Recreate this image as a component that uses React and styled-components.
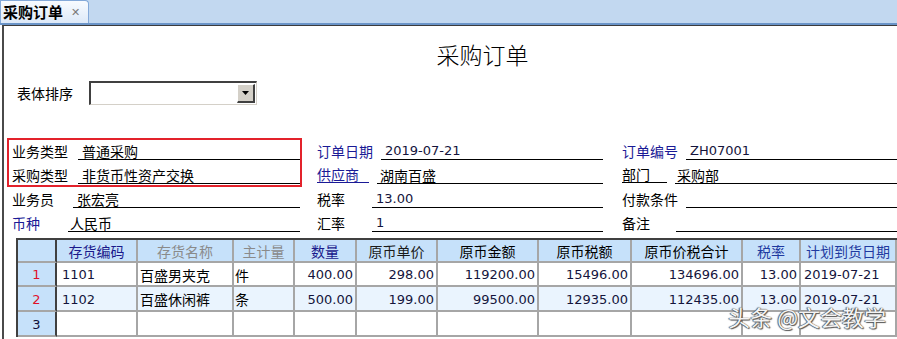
import React from 'react';
import styled, { createGlobalStyle } from 'styled-components';

const GlobalStyle = createGlobalStyle`
  html, body {
    margin: 0;
    padding: 0;
    background: #fff;
  }
  body {
    font-family: "Noto Sans CJK SC", sans-serif;
    color: #000;
  }
`;

const Page = styled.div`
  position: relative;
  width: 897px;
  height: 339px;
  overflow: hidden;
  background: #fff;
`;

const TabBar = styled.div`
  height: 23px;
  background: #c2d8f0;
  border-bottom: 2px solid #6a94c8;
  display: flex;
  align-items: flex-end;
`;

const Tab = styled.div`
  box-sizing: border-box;
  height: 23px;
  width: 89px;
  border: 1px solid #84a9d9;
  border-bottom: none;
  border-radius: 0 4px 0 0;
  background: linear-gradient(#f8fbff, #dde9f8);
  display: flex;
  align-items: center;
  padding-left: 2px;
  gap: 8px;
`;

const TabTitle = styled.span`
  font-size: 15px;
  font-weight: 700;
  line-height: 20px;
`;

const TabClose = styled.span`
  font-family: "DejaVu Sans", sans-serif;
  font-size: 11px;
  font-weight: 700;
  color: #7a7a7a;
`;

const Panel = styled.div`
  margin-left: 2px;
  border-top: 1px solid #3c3c3c;
  border-left: 2px solid #4a4a4a;
  height: 313px;
`;

const Title = styled.h1`
  margin: 13px 0 0;
  height: 30px;
  line-height: 30px;
  padding-left: 64px;
  text-align: center;
  font-size: 23px;
  font-weight: 300;
`;

const SortRow = styled.div`
  margin-top: 12px;
  height: 24px;
  display: flex;
  align-items: center;
  padding-left: 13px;
  gap: 16px;
`;

const SortLabel = styled.span`
  font-size: 14px;
  line-height: 16px;
`;

const Select = styled.div`
  box-sizing: border-box;
  width: 168px;
  height: 24px;
  border-top: 2px solid #404040;
  border-left: 2px solid #404040;
  border-right: 1px solid #d4d0c8;
  border-bottom: 1px solid #d4d0c8;
  background: #fff;
  display: flex;
  justify-content: flex-end;
  align-items: center;
  padding-right: 1px;
`;

const SelectButton = styled.div`
  box-sizing: border-box;
  width: 18px;
  height: 19px;
  background: #d4d0c8;
  border-top: 1px solid #fff;
  border-left: 1px solid #fff;
  border-right: 2px solid #404040;
  border-bottom: 2px solid #404040;
  display: flex;
  align-items: center;
  justify-content: center;
`;

const Form = styled.div`
  position: relative;
  margin-top: 31px;
  padding-left: 8px;
  display: grid;
  grid-template-columns: 305px 305px 275px;
  grid-auto-rows: 24px;
`;

const Highlight = styled.div`
  position: absolute;
  left: 3px;
  top: 2px;
  width: 295px;
  height: 49px;
  box-sizing: border-box;
  border: 2px solid #e3222b;
  pointer-events: none;
`;

const Field = styled.div`
  display: flex;
  align-items: flex-end;
  padding-right: ${(p) => p.$pr}px;
`;

const Label = styled.span`
  flex: 0 0 ${(p) => p.$w}px;
  font-size: 14px;
  line-height: 16px;
  padding-bottom: 1px;
  color: ${(p) => (p.$blue ? '#1a1a96' : '#000')};
`;

const LinkText = styled.span`
  display: inline-block;
  width: calc(100% - 8px);
  border-bottom: 1px solid currentColor;
  line-height: 15px;
`;

const Value = styled.div`
  flex: 1;
  height: 16px;
  border-bottom: 1px solid #000;
  padding-left: ${(p) => p.$pl}px;
  white-space: nowrap;
  font-family: ${(p) =>
    p.$num ? '"DejaVu Sans", sans-serif' : '"Noto Sans CJK SC", sans-serif'};
  font-size: ${(p) => (p.$num ? 13 : 14)}px;
  line-height: 16px;
  color: ${(p) => (p.$num ? '#14143c' : '#000')};
`;

const Grid = styled.div`
  margin: 6px 0 0 12px;
  width: 881px;
  border-top: 2px solid #404040;
  border-left: 2px solid #404040;
  box-sizing: border-box;
`;

const COLS = '39px 81px 96px 61px 62px 81px 101px 93px 111px 58px 96px';

const GridRow = styled.div`
  display: grid;
  grid-template-columns: ${COLS};
  height: ${(p) => p.$h}px;
  background: ${(p) => p.$bg};
`;

const Cell = styled.div`
  box-sizing: border-box;
  border-right: 2px solid ${(p) => (p.$dark ? '#404040' : '#a6a6a6')};
  border-bottom: 2px solid #a6a6a6;
  display: flex;
  align-items: center;
  justify-content: ${(p) => p.$align || 'flex-start'};
  padding: 1px ${(p) => p.$pr ?? 2}px 0 ${(p) => p.$pl ?? 2}px;
  white-space: nowrap;
  overflow: hidden;
  background: ${(p) => p.$bg || 'transparent'};
  font-family: ${(p) =>
    p.$num ? '"DejaVu Sans", sans-serif' : '"Noto Sans CJK SC", sans-serif'};
  font-size: ${(p) => (p.$num ? 13 : 14)}px;
  color: ${(p) => p.$color || '#000'};
`;

const Watermark = styled.div`
  position: absolute;
  right: 11px;
  top: 302px;
  font-size: 22px;
  line-height: 28px;
  color: #f4f4f4;
  text-shadow: 0 0 1px #333, 1px 1px 1px #555, -1px 0 1px #666;
  white-space: nowrap;
  pointer-events: none;
`;

const HEAD_BG = '#c6e1fa';
const NAVY = '#1a1a8c';

const fields = [
  { label: '业务类型', w: 66, value: '普通采购' },
  { label: '订单日期', w: 64, value: '2019-07-21', blue: true, num: true },
  { label: '订单编号', w: 64, value: 'ZH07001', blue: true, num: true },
  { label: '采购类型', w: 66, value: '非货币性资产交换' },
  { label: '供应商', w: 60, value: '湖南百盛', blue: true, link: true, pl: 3 },
  { label: '部门', w: 53, value: '采购部', link: true, pl: 2 },
  { label: '业务员', w: 61, value: '张宏亮' },
  { label: '税率', w: 55, value: '13.00', num: true },
  { label: '付款条件', w: 64, value: '' },
  { label: '币种', w: 56, value: '人民币', blue: true, pl: 2 },
  { label: '汇率', w: 55, value: '1', num: true },
  { label: '备注', w: 54, value: '' },
];

const headers = [
  { t: '', c: NAVY },
  { t: '存货编码', c: NAVY },
  { t: '存货名称', c: '#8a8a8a' },
  { t: '主计量', c: '#8a8a8a' },
  { t: '数量', c: NAVY },
  { t: '原币单价', c: '#1a1a1a' },
  { t: '原币金额', c: '#000' },
  { t: '原币税额', c: '#000' },
  { t: '原币价税合计', c: '#000' },
  { t: '税率', c: '#1f3aa0' },
  { t: '计划到货日期', c: '#1f3aa0' },
];

const rows = [
  {
    n: '1', nc: '#e0102a', bg: '#fff',
    cells: ['1101', '百盛男夹克', '件', '400.00', '298.00', '119200.00', '15496.00', '134696.00', '13.00', '2019-07-21'],
  },
  {
    n: '2', nc: '#e0102a', bg: '#eaf4fe',
    cells: ['1102', '百盛休闲裤', '条', '500.00', '199.00', '99500.00', '12935.00', '112435.00', '13.00', '2019-07-21'],
  },
  { n: '3', nc: '#10103a', bg: '#fff', cells: ['', '', '', '', '', '', '', '', '', ''] },
];

const cellStyle = [
  { num: true, pl: 5, color: '#14143c' },
  { pl: 2 },
  { pl: 1 },
  { num: true, align: 'flex-end', color: '#14143c' },
  { num: true, align: 'flex-end', color: '#14143c' },
  { num: true, align: 'flex-end', color: '#14143c' },
  { num: true, align: 'flex-end', color: '#14143c' },
  { num: true, align: 'flex-end', color: '#14143c' },
  { num: true, align: 'flex-end', color: '#14143c' },
  { num: true, pl: 3, color: '#14143c' },
];

function Arrow() {
  return (
    <svg width="8" height="5" viewBox="0 0 8 5">
      <path d="M0 0h7L3.5 4z" fill="#000" />
    </svg>
  );
}

export default function App() {
  return (
    <Page>
      <GlobalStyle />
      <TabBar>
        <Tab>
          <TabTitle>采购订单</TabTitle>
          <TabClose>✕</TabClose>
        </Tab>
      </TabBar>
      <Panel>
        <Title>采购订单</Title>
        <SortRow>
          <SortLabel>表体排序</SortLabel>
          <Select>
            <SelectButton>
              <Arrow />
            </SelectButton>
          </Select>
        </SortRow>
        <Form>
          {fields.map((f, i) => (
            <Field key={f.label} $pr={i % 3 === 0 ? 17 : i % 3 === 1 ? 19 : 0}>
              <Label $w={f.w} $blue={f.blue}>
                {f.link ? <LinkText>{f.label}</LinkText> : f.label}
              </Label>
              <Value $num={f.num} $pl={f.pl ?? 4}>
                {f.value}
              </Value>
            </Field>
          ))}
          <Highlight />
        </Form>
        <Grid>
          <GridRow $h={23} $bg={HEAD_BG}>
            {headers.map((h, i) => (
              <Cell key={i} $align="center" $color={h.c} $dark={i === 0}>
                {h.t}
              </Cell>
            ))}
          </GridRow>
          {rows.map((r, ri) => (
            <GridRow key={r.n} $h={ri === 0 ? 24 : 25} $bg={r.bg}>
              <Cell $align="center" $dark $bg={HEAD_BG} $num $color={r.nc}>
                {r.n}
              </Cell>
              {r.cells.map((c, ci) => {
                const s = cellStyle[ci];
                return (
                  <Cell
                    key={ci}
                    $num={s.num}
                    $align={s.align}
                    $pl={s.pl}
                    $color={s.color}
                  >
                    {c}
                  </Cell>
                );
              })}
            </GridRow>
          ))}
        </Grid>
      </Panel>
      <Watermark>头条 @文会教学</Watermark>
    </Page>
  );
}
